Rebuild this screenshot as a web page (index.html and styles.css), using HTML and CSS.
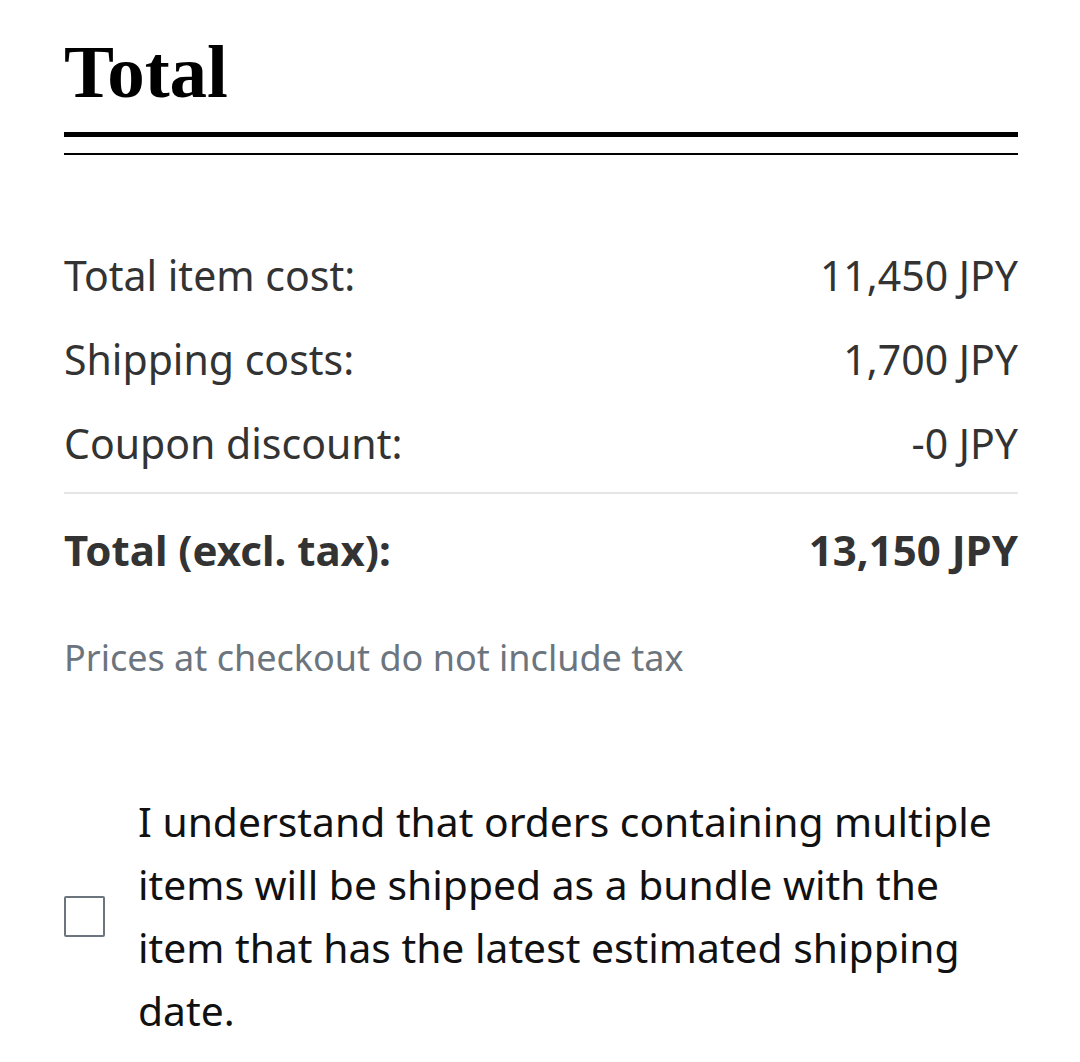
FILE: index.html
```html
<!DOCTYPE html>
<html lang="en">
<head>
    <meta charset="UTF-8">
    <meta name="viewport" content="width=device-width, initial-scale=1.0">
    <title>Order Total</title>
    <link rel="stylesheet" href="styles.css">
</head>
<body>
    <main class="summary">
        <h2 class="summary-title">Total</h2>
        <div class="double-rule"></div>

        <div class="cost-list">
            <div class="cost-row">
                <span>Total item cost:</span>
                <span>11,450 JPY</span>
            </div>
            <div class="cost-row">
                <span>Shipping costs:</span>
                <span>1,700 JPY</span>
            </div>
            <div class="cost-row">
                <span>Coupon discount:</span>
                <span>-0 JPY</span>
            </div>
        </div>

        <div class="cost-row total-row">
            <span>Total (excl. tax):</span>
            <span>13,150 JPY</span>
        </div>

        <p class="tax-note">Prices at checkout do not include tax</p>

        <label class="bundle-check">
            <input type="checkbox" class="check-box">
            <span class="check-text">I understand that orders containing multiple items will be shipped as a bundle with the item that has the latest estimated shipping date.</span>
        </label>
    </main>
</body>
</html>
```

FILE: styles.css
```css
body {
    font-family: 'Noto Sans', sans-serif;
    margin: 0;
    padding: 0;
    background-color: #fff;
    color: #333;
}

.summary {
    padding: 35px 62px 0 64px;
}

.summary-title {
    font-family: 'Liberation Serif', serif;
    font-weight: 700;
    font-size: 75px;
    line-height: 74px;
    margin: 0;
    color: #000;
}

.double-rule {
    margin-top: 23px;
    height: 16px;
    border-top: 5px solid #000;
    border-bottom: 2px solid #000;
}

.cost-list {
    margin-top: 78px;
    padding-bottom: 7px;
    border-bottom: 2px solid #e6e6e6;
}

.cost-row {
    display: flex;
    justify-content: space-between;
    font-size: 41px;
    line-height: 84px;
}

.total-row {
    margin-top: 14px;
    font-size: 42px;
    font-weight: 700;
}

.tax-note {
    margin: 42px 0 0;
    font-size: 36px;
    line-height: 48px;
    color: #6c757d;
}

.bundle-check {
    display: flex;
    align-items: center;
    gap: 33px;
    margin-top: 108px;
    cursor: pointer;
}

.check-box {
    appearance: none;
    flex: none;
    width: 41px;
    height: 41px;
    margin: 0;
    border: 2px solid #6c757d;
    border-radius: 2px;
    background: #fff;
}

.check-text {
    font-size: 40.8px;
    line-height: 63px;
    color: #111;
}
```
